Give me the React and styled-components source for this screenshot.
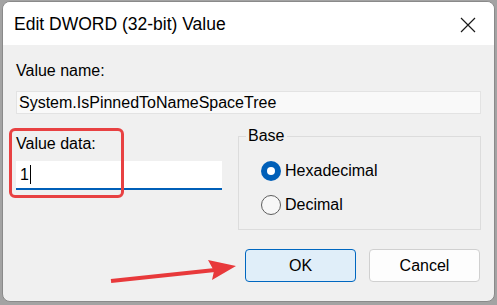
import React from "react";
import styled, { createGlobalStyle } from "styled-components";

const Global = createGlobalStyle`
  html, body { margin: 0; padding: 0; }
  body {
    width: 497px; height: 305px; overflow: hidden;
    background: #a3a3a3;
    font-family: "Liberation Sans", Arial, sans-serif;
  }
`;

const Stage = styled.div`
  padding: 1px 2px 3px 2px;
  width: 497px; height: 305px; box-sizing: border-box;
`;

const Dialog = styled.div`
  position: relative;
  width: 493px; height: 301px; box-sizing: border-box;
  background: #f0f0f0;
  border-radius: 8px;
  border: 1px solid #8a8a8a;
  overflow: hidden;
  display: flex; flex-direction: column;
`;

const TitleBar = styled.div`
  height: 43px; background: #ffffff;
  display: flex; align-items: center; justify-content: space-between;
  padding: 0 12px 0 11px;
`;

const Title = styled.div`
  font-size: 17.5px; color: #000; margin-top: 2px;
`;

const Close = styled.div`
  width: 22px; height: 22px; display: flex; align-items: center; justify-content: center;
  margin-right: 3px; margin-top: 2px;
`;

const Body = styled.div`
  flex: 1; padding: 17px 13px 0 13px;
  display: flex; flex-direction: column;
`;

const Label = styled.div`
  font-size: 16px; color: #000; line-height: 18px;
`;

const NameField = styled.div`
  margin-top: 11px; height: 23px; box-sizing: border-box;
  background: #f9f9f9; border: 1px solid #e3e3e3;
  font-size: 16px; line-height: 21px; padding-left: 2px; color: #000;
  width: 465px;
`;

const Row = styled.div`
  display: flex; margin-top: 15px;
`;

const DataCol = styled.div`
  position: relative; width: 207px; padding-top: 6px;
`;

const Highlight = styled.div`
  position: absolute; left: -7px; top: -1px; width: 115px; height: 70px;
  box-sizing: border-box; border: 3px solid #e84142; border-radius: 6px;
`;

const Input = styled.div`
  margin-top: 8px; height: 29px; box-sizing: border-box; width: 206px;
  background: #fff; border-bottom: 2px solid #005fb8;
  font-size: 16px; line-height: 27px; padding-left: 4px; display: flex; align-items: center;
`;

const Caret = styled.span`
  display: inline-block; width: 1px; height: 19px; background: #000; margin-left: 1px;
`;

const Group = styled.fieldset`
  margin: -2px 0 0 16px; padding: 16px 0 0 22px; width: 244px; height: 103px; box-sizing: border-box;
  border: 1px solid #dcdcdc; border-radius: 0;
  legend { padding: 0 2px; margin-left: -15px; font-size: 16px; color: #000; }
`;

const RadioRow = styled.label`
  display: flex; align-items: center; gap: 4px; font-size: 16px; height: 20px; margin-top: ${p => p.$mt}px;
`;

const Radio = styled.span`
  width: 20px; height: 20px; box-sizing: border-box; border-radius: 50%;
  ${p => p.$on ? `background:#005fb8; border:none; display:flex; align-items:center; justify-content:center;` : `border:1px solid #5e5e5e; background:#f7f7f7;`}
  &::after { content: ""; ${p => p.$on ? `width:8px;height:8px;border-radius:50%;background:#fff;` : ``} }
`;

const Buttons = styled.div`
  display: flex; justify-content: flex-end; gap: 13px; margin-top: 19px; padding-right: 1px;
`;

const Button = styled.div`
  width: 111px; height: 33px; box-sizing: border-box; border-radius: 4px;
  display: flex; align-items: center; justify-content: center; font-size: 16px; color: #000;
  background: ${p => p.$primary ? "#e0eef9" : "#fdfdfd"};
  border: 1px solid ${p => p.$primary ? "#0067c0" : "#d0d0d0"};
`;

const Arrow = styled.svg`
  position: absolute; left: 100px; top: 250px;
`;

export default function App() {
  return (
    <>
      <Global />
      <Stage>
        <Dialog>
          <TitleBar>
            <Title>Edit DWORD (32-bit) Value</Title>
            <Close>
              <svg width="16" height="16" viewBox="0 0 16 16"><path d="M1 1L15 15M15 1L1 15" stroke="#1a1a1a" strokeWidth="1.2" /></svg>
            </Close>
          </TitleBar>
          <Body>
            <Label>Value name:</Label>
            <NameField>System.IsPinnedToNameSpaceTree</NameField>
            <Row>
              <DataCol>
                <Highlight />
                <Label>Value data:</Label>
                <Input>1<Caret /></Input>
              </DataCol>
              <Group>
                <legend>Base</legend>
                <RadioRow $mt={0}><Radio $on />Hexadecimal</RadioRow>
                <RadioRow $mt={14}><Radio />Decimal</RadioRow>
              </Group>
            </Row>
            <Buttons>
              <Button $primary>OK</Button>
              <Button>Cancel</Button>
            </Buttons>
          </Body>
          <Arrow width="140" height="40" viewBox="0 0 140 40">
            <path d="M8 29 L112 18" stroke="#e8393b" strokeWidth="4" strokeLinecap="butt" />
            <path d="M133 14 L105 8 L111 19 L109 28 Z" fill="#e8393b" />
          </Arrow>
        </Dialog>
      </Stage>
    </>
  );
}
